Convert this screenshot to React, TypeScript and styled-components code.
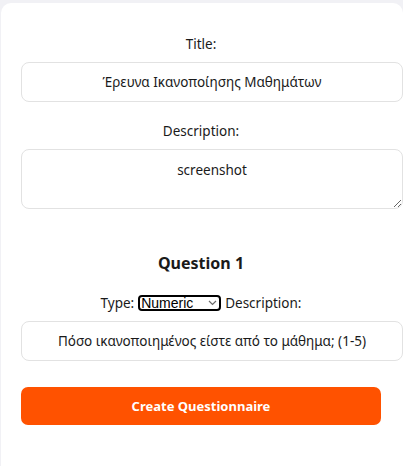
import React from "react";
import styled, { createGlobalStyle } from "styled-components";

const Global = createGlobalStyle`
  html, body { margin: 0; padding: 0; background: #f1f1f5; }
  body { font-family: "Noto Sans", "Open Sans", sans-serif; color: #1a1a1a; }
  * { box-sizing: content-box; }
`;

const Card = styled.div`
  margin: 3px 0 0 1px;
  width: 360px;
  padding: 31px 22px 60px 20px;
  background: #ffffff;
  border-radius: 10px 10px 0 10px;
`;

const Field = styled.div<{ $gap?: number }>`
  display: flex;
  flex-direction: column;
  margin-bottom: ${(p) => p.$gap ?? 19}px;
`;

const Label = styled.label`
  display: block;
  text-align: center;
  font-size: 13.5px;
  line-height: 20px;
  margin: 0 0 8px;
`;

const TextInput = styled.input`
  width: 100%;
  padding: 10px;
  height: 18px;
  font-family: inherit;
  font-size: 13.5px;
  color: #1a1a1a;
  text-align: center;
  border: 1px solid #e2e2e2;
  border-radius: 8px;
  background: #fff;
  outline: none;
`;

const TextArea = styled.textarea`
  width: 100%;
  height: 38px;
  padding: 10px;
  font-family: inherit;
  font-size: 13.5px;
  line-height: 20px;
  color: #1a1a1a;
  text-align: center;
  border: 1px solid #e2e2e2;
  border-radius: 8px;
  background: #fff;
  outline: none;
  resize: vertical;
  display: block;
`;

const Heading = styled.h3`
  margin: 43px 0 19px;
  text-align: center;
  font-size: 16px;
  line-height: 22px;
  font-weight: 700;
`;

const TypeRow = styled.div`
  display: flex;
  justify-content: center;
  align-items: center;
  gap: 4px;
  font-size: 13.5px;
  line-height: 20px;
  margin-bottom: 8px;
`;

const SelectWrap = styled.span`
  position: relative;
  display: inline-flex;
  width: 83px;
  height: 16px;
`;

const Select = styled.select`
  appearance: none;
  width: 83px;
  height: 16px;
  box-sizing: border-box;
  padding: 0 0 0 1px;
  margin: 0;
  font-family: "Liberation Sans Narrow", "Liberation Sans", Arial, sans-serif;
  font-size: 14px;
  line-height: 12px;
  color: #000;
  border: 2px solid #000;
  border-radius: 4px;
  background: #fff;
  outline: none;
`;

const Chevron = styled.svg`
  position: absolute;
  right: 4px;
  top: 5px;
  width: 9px;
  height: 6px;
  pointer-events: none;
`;

const Button = styled.button`
  display: block;
  width: 100%;
  height: 38px;
  margin-top: 26px;
  padding: 0;
  border: none;
  border-radius: 7px;
  background: #ff5200;
  color: #ffffff;
  font-family: inherit;
  font-size: 13px;
  font-weight: 700;
  cursor: pointer;
`;

export default function App() {
  return (
    <>
      <Global />
      <Card>
        <Field>
          <Label>Title:</Label>
          <TextInput defaultValue="Έρευνα Ικανοποίησης Μαθημάτων" />
        </Field>
        <Field $gap={0}>
          <Label>Description:</Label>
          <TextArea defaultValue="screenshot" />
        </Field>
        <Heading>Question 1</Heading>
        <TypeRow>
          <span>Type:</span>
          <SelectWrap>
            <Select defaultValue="numeric">
              <option value="numeric">Numeric</option>
              <option value="text">Text</option>
            </Select>
            <Chevron viewBox="0 0 9 6">
              <path d="M1 1 L4.5 4.5 L8 1" fill="none" stroke="#6b6b6b" strokeWidth="1.2" />
            </Chevron>
          </SelectWrap>
          <span>Description:</span>
        </TypeRow>
        <TextInput defaultValue="Πόσο ικανοποιημένος είστε από το μάθημα; (1-5)" />
        <Button>Create Questionnaire</Button>
      </Card>
    </>
  );
}
